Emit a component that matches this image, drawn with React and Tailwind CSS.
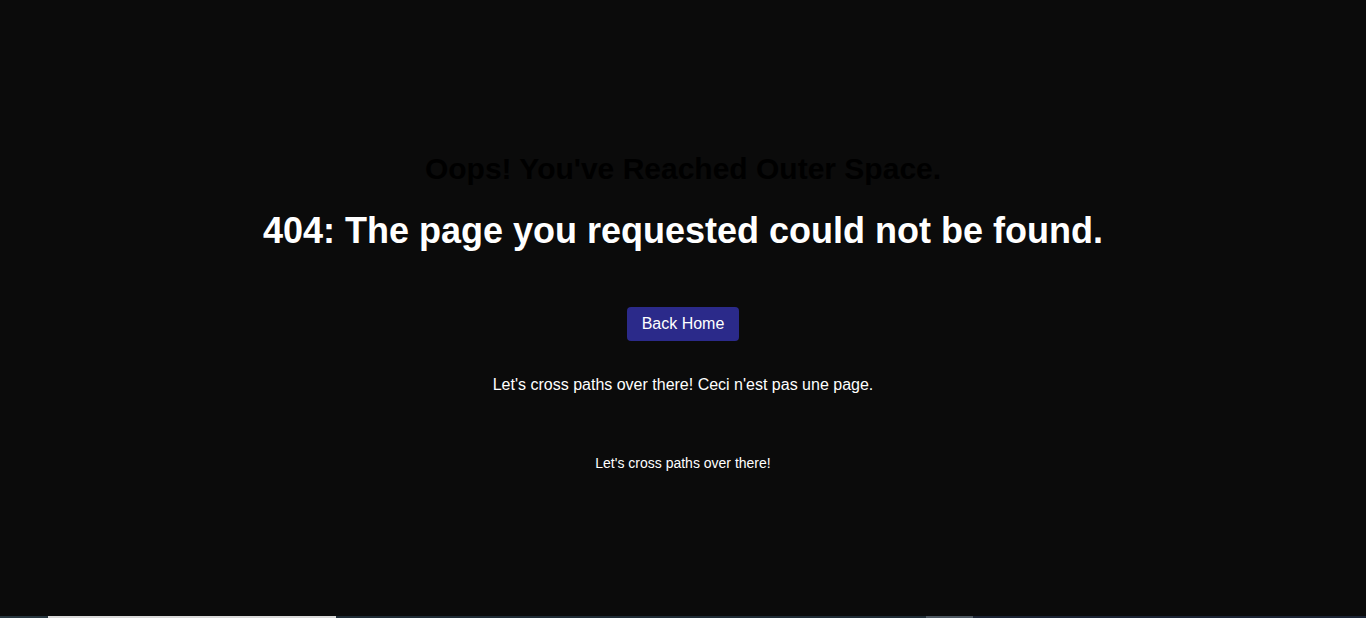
import React from "react";

export default function App() {
  return (
    <div className="h-[618px] w-full bg-[#0b0b0b] flex flex-col overflow-hidden font-['Liberation_Sans',Arial,sans-serif]">
      <main className="flex-1 flex flex-col items-center pt-[153px] text-center">
        {/* titre caché sur le fond */}
        <h2 className="text-[30px] leading-[32px] font-bold text-black">
          Oops! You've Reached Outer Space.
        </h2>
        <h1 className="mt-[26px] text-[36px] leading-[40px] font-bold text-white">
          404: The page you requested could not be found.
        </h1>

        <button className="mt-[56px] h-[34px] px-[15px] rounded-[4px] bg-[#2b2a8a] text-white text-[16px] leading-[20px]">
          Back Home
        </button>

        <p className="mt-[32px] text-[16px] leading-[24px] text-white">
          Let's cross paths over there! Ceci n'est pas une page.
        </p>
        <p className="mt-[56px] text-[14px] leading-[20px] text-white">
          Let's cross paths over there!
        </p>
      </main>

      {/* bande du bas */}
      <div className="h-[2px] flex shrink-0">
        <div className="w-[48px] bg-[#27363f]" />
        <div className="w-[288px] bg-[#d9d9d9]" />
        <div className="w-[590px] bg-[#1f2c36]" />
        <div className="w-[47px] bg-[#4d5862]" />
        <div className="flex-1 bg-[#1b2434]" />
      </div>
    </div>
  );
}
